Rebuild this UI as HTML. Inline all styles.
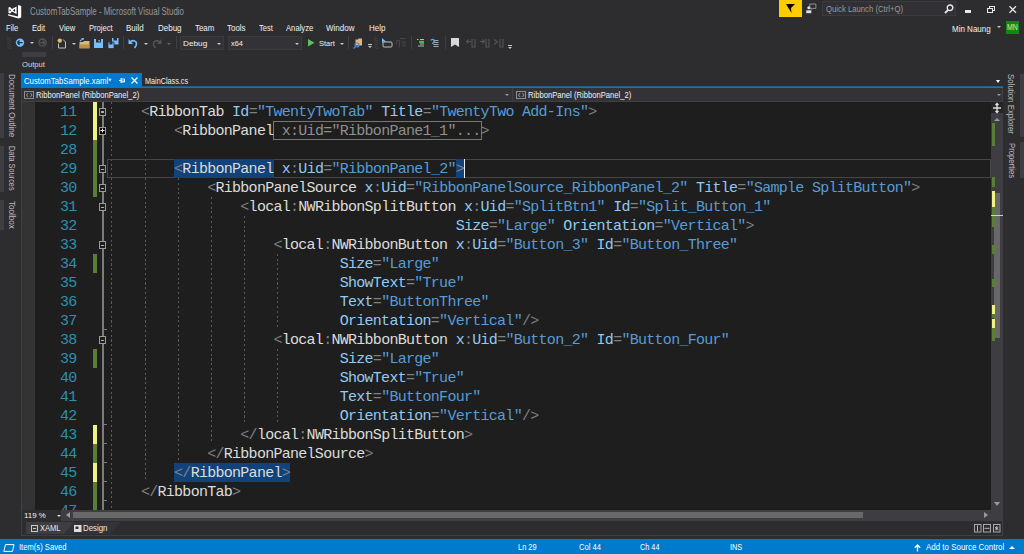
<!DOCTYPE html>
<html><head><meta charset="utf-8">
<style>
*{margin:0;padding:0;box-sizing:border-box}
html,body{width:1024px;height:554px;overflow:hidden;background:#2d2d30;position:relative;font-family:"Liberation Sans",sans-serif}
.a{position:absolute}
svg.a{overflow:visible}
.u{position:absolute;white-space:nowrap;transform-origin:0 0}
.v{position:absolute;white-space:nowrap;writing-mode:vertical-rl;font-size:9px;line-height:8px;color:#d0d0d0}
.cl{position:absolute;left:107.8px;white-space:pre;font-family:"Liberation Mono",monospace;font-size:15px;letter-spacing:-0.72px;line-height:19px;height:19px;color:#dcdcdc}
.ln{position:absolute;left:39.5px;width:37px;text-align:right;font-family:"Liberation Mono",monospace;font-size:15px;letter-spacing:-0.72px;line-height:19px;color:#2b91af}
.sep{position:absolute;top:36px;width:1px;height:13px;background:#3f3f46}
.dd{position:absolute;width:0;height:0;border-left:2px solid transparent;border-right:2px solid transparent;border-top:2px solid #c8c8c8}
.g{position:absolute;width:1px;background:repeating-linear-gradient(to bottom,#5a5a5a 0,#5a5a5a 2px,transparent 2px,transparent 4.75px)}
.fb{position:absolute;left:99px;width:7px;height:8px;border:1px solid #9a9a9a;background:#1e1e1e}
.fb::after{content:"";position:absolute;left:1px;top:2.5px;width:3px;height:1.5px;background:#b0b0b0}
.fp::after{display:none}
.tick{position:absolute;left:103px;width:3.5px;height:1px;background:#7c7c7c}
.chg{position:absolute;left:93px;width:4px}
</style></head><body>

<!-- ===== title bar ===== -->
<svg class="a" style="left:0;top:0" width="26" height="20" viewBox="0 0 26 20">
  <path d="M18 4.9 L21.2 6.1 L21.2 17.6 L18.6 18.4 L8.1 15.6 L8.1 14.2 L18 16.4 Z" fill="#fff"/>
  <path d="M8.5 7.6 L10 7 L12 9 L16.6 6.6 L16.6 14.1 L12 11.6 L10 13.6 L8.5 13 Z M9.6 9 L11.2 10.3 L9.6 11.6 Z M15.1 8.7 L12.9 10.3 L15.1 11.9 Z" fill="#fff" fill-rule="evenodd"/>
</svg>

<div class="a" style="left:779px;top:0;width:23px;height:17px;background:#ffcc00"></div>
<svg class="a" style="left:785px;top:3px" width="11" height="11" viewBox="0 0 11 11"><path d="M1 1 L10 1 L6 5 L6.5 10 Z" fill="#000"/></svg>
<svg class="a" style="left:805px;top:3px" width="12" height="11" viewBox="0 0 12 11">
 <path d="M4.8 1 L10.9 1 L10.9 5.4 L7.5 5.4 L6.5 6.4 L6.5 5.4 L4.8 5.4 Z" fill="none" stroke="#a8a8a8" stroke-width="0.8"/>
 <circle cx="3.8" cy="4.8" r="1.5" fill="#e0e0e0"/><path d="M1.3 10.2 L1.3 7.3 L6.3 7.3 L6.3 10.2 Z" fill="#e0e0e0"/>
</svg>
<div class="a" style="left:822px;top:1px;width:134px;height:15px;background:#313135;border:1px solid #3a3a3f"></div>
<svg class="a" style="left:944px;top:4px" width="10" height="10" viewBox="0 0 10 10"><circle cx="6" cy="3.8" r="2.8" fill="none" stroke="#e8e8e8" stroke-width="1.4"/><path d="M4.2 5.8 L1 9" stroke="#e8e8e8" stroke-width="1.8"/></svg>
<div class="a" style="left:964.5px;top:10px;width:6.5px;height:2.5px;background:#e8e8e8"></div>
<svg class="a" style="left:987px;top:6px" width="8" height="7" viewBox="0 0 8 7"><rect x="2.5" y="0.5" width="5" height="4" fill="none" stroke="#e8e8e8"/><rect x="0.5" y="2.5" width="5" height="4" fill="#2d2d30" stroke="#e8e8e8"/></svg>
<svg class="a" style="left:1009px;top:6px" width="8" height="7" viewBox="0 0 8 7"><path d="M0.5 0.3 L7 6.7 M7 0.3 L0.5 6.7" stroke="#e8e8e8" stroke-width="1.2"/></svg>

<!-- ===== menu ===== -->

<div class="dd" style="left:997px;top:26px"></div>
<div class="a" style="left:1006px;top:21px;width:13px;height:13px;background:#0e8a0e"></div>

<!-- ===== toolbar ===== -->
<svg class="a" style="left:7px;top:37px" width="5" height="12" viewBox="0 0 5 12"><g fill="#4a4a4a"><rect x="0.5" y="0" width="1" height="1"/><rect x="0.5" y="2" width="1" height="1"/><rect x="0.5" y="4" width="1" height="1"/><rect x="0.5" y="6" width="1" height="1"/><rect x="0.5" y="8" width="1" height="1"/><rect x="0.5" y="10" width="1" height="1"/><rect x="2.5" y="1" width="1" height="1"/><rect x="2.5" y="3" width="1" height="1"/><rect x="2.5" y="5" width="1" height="1"/><rect x="2.5" y="7" width="1" height="1"/><rect x="2.5" y="9" width="1" height="1"/><rect x="2.5" y="11" width="1" height="1"/></g></svg>
<svg class="a" style="left:15px;top:38px" width="10" height="10" viewBox="0 0 10 10"><circle cx="5" cy="4.6" r="4.2" fill="#75beff"/><path d="M2.3 4.6 L4.6 2.4 M2.3 4.6 L4.6 6.8 M2.5 4.6 L7.6 4.6" stroke="#2d2d30" stroke-width="1.4"/></svg>
<div class="dd" style="left:29.5px;top:42px"></div>
<svg class="a" style="left:37.5px;top:38px" width="10" height="10" viewBox="0 0 10 10"><circle cx="4.5" cy="4.6" r="3.6" fill="none" stroke="#555" stroke-width="1.3"/><path d="M7 4.6 L4.7 2.6 M7 4.6 L4.7 6.6 M2.2 4.6 L6.8 4.6" stroke="#555" stroke-width="1.2"/></svg>
<div class="sep" style="left:52px"></div>
<svg class="a" style="left:57px;top:37.5px" width="10" height="11" viewBox="0 0 10 11"><path d="M1.5 5.5 L1.5 10 L8.5 10 L8.5 4 L6 1.5" fill="none" stroke="#c0c0c0" stroke-width="1"/><circle cx="2.8" cy="2.6" r="2.2" fill="#dcb67a"/></svg>
<div class="dd" style="left:71.5px;top:42.5px"></div>
<svg class="a" style="left:79px;top:38px" width="11" height="11" viewBox="0 0 11 11"><path d="M0.5 4 L4 4 L5 3 L10.5 3 L10.5 10.3 L0.5 10.3 Z" fill="#dcb67a"/><path d="M0.6 6.5 L10.3 6.5 L10.3 10.3 L0.6 10.3Z" fill="#b98f4c"/><path d="M1 3 L4 0.6 M2.5 0.5 L4.2 0.6 L4 2" fill="none" stroke="#75beff" stroke-width="1.2"/></svg>
<svg class="a" style="left:94px;top:38.5px" width="10" height="10" viewBox="0 0 10 10"><path d="M0 0 L9 0 L9 9 L0 9Z" fill="#75beff"/><path d="M2 0 L7 0 L7 3.5 L2 3.5Z" fill="#2d2d30"/><rect x="4.5" y="1" width="1.3" height="1.6" fill="#75beff"/></svg>
<svg class="a" style="left:108px;top:38px" width="11" height="11" viewBox="0 0 11 11"><path d="M4 0 L10.5 0 L10.5 6.5 L4 6.5Z" fill="#75beff"/><path d="M5.5 0 L9 0 L9 2.5 L5.5 2.5Z" fill="#2d2d30"/><path d="M0 4 L6 4 L6 10.5 L0 10.5Z" fill="#75beff" stroke="#2d2d30" stroke-width="0.8"/><path d="M1.5 4 L4.5 4 L4.5 6.5 L1.5 6.5Z" fill="#2d2d30"/></svg>
<div class="sep" style="left:123px"></div>
<svg class="a" style="left:127.5px;top:37.5px" width="10" height="11" viewBox="0 0 10 11"><path d="M1.5 4.5 Q5 1 8 4 Q9.5 6.5 6.5 10" fill="none" stroke="#75beff" stroke-width="1.6"/><path d="M0.5 1 L0.5 6 L5 6Z" fill="#75beff"/></svg>
<div class="dd" style="left:144px;top:42.5px"></div>
<svg class="a" style="left:152px;top:37.5px" width="10" height="11" viewBox="0 0 10 11"><path d="M8.5 4.5 Q5 1 2 4 Q0.5 6.5 3.5 10" fill="none" stroke="#555" stroke-width="1.5"/><path d="M9.5 1 L9.5 6 L5 6Z" fill="#555"/></svg>
<div class="dd" style="left:167px;top:42.5px;border-top-color:#666"></div>
<div class="sep" style="left:176px"></div>
<div class="a" style="left:180px;top:35.5px;width:44px;height:14px;background:#333337;border:1px solid #3a3a3f"></div>
<div class="dd" style="left:217px;top:42.5px"></div>
<div class="a" style="left:228px;top:35.5px;width:74px;height:14px;background:#333337;border:1px solid #3a3a3f"></div>
<div class="dd" style="left:295px;top:42.5px"></div>
<svg class="a" style="left:307.5px;top:39px" width="7" height="8" viewBox="0 0 7 8"><path d="M0 0 L6.5 3.7 L0 7.5Z" fill="#5fbf5f"/></svg>
<div class="dd" style="left:340px;top:42.5px"></div>
<div class="sep" style="left:348px"></div>
<svg class="a" style="left:353px;top:37.5px" width="11" height="11" viewBox="0 0 11 11"><path d="M2.5 1.5 L5 1.5 L5.5 0.5 L9 0.5 L9 7.5 L2.5 7.5Z" fill="#dcb67a"/><circle cx="4" cy="7" r="2" fill="none" stroke="#3e8ed0" stroke-width="1.2"/><path d="M2.6 8.4 L0.5 10.5" stroke="#3e8ed0" stroke-width="1.4"/></svg>
<div class="a" style="left:367.5px;top:44px;width:4px;height:1px;background:#c8c8c8"></div>
<div class="dd" style="left:367.5px;top:46px"></div>
<svg class="a" style="left:374px;top:37px" width="5" height="12" viewBox="0 0 5 12"><g fill="#4a4a4a"><rect x="0.5" y="0" width="1" height="1"/><rect x="0.5" y="2" width="1" height="1"/><rect x="0.5" y="4" width="1" height="1"/><rect x="0.5" y="6" width="1" height="1"/><rect x="0.5" y="8" width="1" height="1"/><rect x="0.5" y="10" width="1" height="1"/><rect x="2.5" y="1" width="1" height="1"/><rect x="2.5" y="3" width="1" height="1"/><rect x="2.5" y="5" width="1" height="1"/><rect x="2.5" y="7" width="1" height="1"/><rect x="2.5" y="9" width="1" height="1"/><rect x="2.5" y="11" width="1" height="1"/></g></svg>
<svg class="a" style="left:382px;top:38px" width="11" height="10" viewBox="0 0 11 10"><rect x="1" y="4" width="9" height="5" rx="1" fill="none" stroke="#c0c0c0" stroke-width="1"/><path d="M0 0 L0 5 L1.5 3.5 L4.5 4Z" fill="#75beff"/></svg>
<svg class="a" style="left:395.5px;top:37.5px" width="11" height="10" viewBox="0 0 11 10"><path d="M4 0.5 L10 0.5 M0.5 2.5 L3.5 2.5 M0.5 2.5 L0.5 6.5 M3.5 2.5 L3.5 9.5 M5 4 L10 4 M6 6 L10 6 M6 8 L10 8" fill="none" stroke="#454545" stroke-width="1"/></svg>
<div class="sep" style="left:411px"></div>
<svg class="a" style="left:417px;top:39px" width="8" height="8" viewBox="0 0 8 8"><path d="M0 0.5 L1.5 0.5 M3 0.5 L7 0.5 M3 5 L7 5 M1 7 L7 7 M2 3 L3 3" fill="none" stroke="#b8b8b8" stroke-width="1"/><rect x="2.5" y="1.8" width="4.5" height="2.4" fill="#3fc03f"/></svg>
<svg class="a" style="left:430px;top:38.5px" width="10" height="9" viewBox="0 0 10 9"><path d="M3.5 1.5 L8.5 1.5 M3.5 3.5 L8.5 3.5 M3.5 5.5 L8.5 5.5 M3.5 7.5 L8.5 7.5" stroke="#a8a8a8" stroke-width="1.2"/><path d="M0.8 1.2 Q2.5 -0.2 4.2 1 Q5 2.5 3.2 3.6 L2.5 5" fill="none" stroke="#5aa7e8" stroke-width="1.3"/></svg>
<div class="sep" style="left:445px"></div>
<svg class="a" style="left:450.5px;top:38px" width="9" height="10" viewBox="0 0 9 10"><path d="M0 0 L8 0 L8 9 L4 6.5 L0 9Z" fill="#d8d8d8"/></svg>
<svg class="a" style="left:466px;top:38px" width="10" height="10" viewBox="0 0 10 10"><path d="M6 1 L6 9 L9 9 L9 1 M0.5 3.5 L5 3.5 M2.5 1.5 L0.5 3.5 L2.5 5.5" fill="none" stroke="#555" stroke-width="1.1"/></svg>
<svg class="a" style="left:480px;top:38px" width="10" height="10" viewBox="0 0 10 10"><path d="M6 1 L6 9 L9 9 L9 1 M0 3.5 L4.5 3.5 M2.5 1.5 L4.5 3.5 L2.5 5.5" fill="none" stroke="#555" stroke-width="1.1"/></svg>
<svg class="a" style="left:494px;top:38px" width="10" height="10" viewBox="0 0 10 10"><path d="M6 1 L6 9 L9 9 L9 1 M0 1.5 L3.5 4 L0 6.5" fill="none" stroke="#555" stroke-width="1.1"/></svg>
<div class="a" style="left:508px;top:45px;width:4px;height:1px;background:#c8c8c8"></div>
<div class="dd" style="left:508px;top:47px"></div>

<!-- ===== output collapsed strip ===== -->
<div class="a" style="left:21.5px;top:52px;width:24px;height:4.5px;background:#3e3e42"></div>

<!-- ===== left tool strip ===== -->
<div class="a" style="left:0;top:73.4px;width:4px;height:64.5px;background:#3e3e42"></div>
<div class="a" style="left:0;top:145.5px;width:4px;height:46.5px;background:#3e3e42"></div>
<div class="a" style="left:0;top:200px;width:4px;height:29.5px;background:#3e3e42"></div>

<!-- ===== right tool strip ===== -->
<div class="a" style="left:1019.5px;top:73.7px;width:4.5px;height:63.7px;background:#3e3e42"></div>
<div class="a" style="left:1019.5px;top:142px;width:4.5px;height:36px;background:#3e3e42"></div>

<!-- ===== doc tabs ===== -->
<div class="a" style="left:21px;top:73px;width:121px;height:14px;background:#007acc"></div>
<svg class="a" style="left:119px;top:77px" width="6" height="7" viewBox="0 0 6 7"><path d="M0 3.5 L2 3.5 M2 1 L2 6 M2 2 L5.5 2 L5.5 5 L2 5 M2 4 L5.5 4" fill="none" stroke="#fff" stroke-width="0.9"/></svg>
<svg class="a" style="left:131px;top:77px" width="7" height="7" viewBox="0 0 7 7"><path d="M0.5 0.5 L6.5 6.5 M6.5 0.5 L0.5 6.5" stroke="#fff" stroke-width="1.2"/></svg>
<div class="a" style="left:996px;top:80px;width:0;height:0;border-left:2.5px solid transparent;border-right:2.5px solid transparent;border-top:3px solid #fff"></div>
<div class="a" style="left:21px;top:87px;width:982px;height:1px;background:#007acc"></div><div class="a" style="left:142px;top:86px;width:861px;height:1px;background:#1a5e8e"></div>

<!-- ===== nav bar ===== -->
<div class="a" style="left:21px;top:88px;width:982px;height:14px;background:#333337;border:1px solid #3f3f46;border-top:none"></div>
<div class="a" style="left:511.5px;top:88px;width:1.5px;height:14px;background:#3f3f46"></div>
<svg class="a" style="left:24px;top:91px" width="11" height="8" viewBox="0 0 11 8"><rect x="0.5" y="0.5" width="9" height="7" fill="none" stroke="#8c8c8c"/><path d="M4 2 L2.5 4 L4 6 M6.5 2 L8 4 L6.5 6" fill="none" stroke="#a0a0a0" stroke-width="0.9"/></svg>
<div class="dd" style="left:505px;top:94px;border-top-color:#999"></div>
<svg class="a" style="left:515.5px;top:91px" width="11" height="8" viewBox="0 0 11 8"><rect x="0.5" y="0.5" width="9" height="7" fill="none" stroke="#8c8c8c"/><path d="M4 2 L2.5 4 L4 6 M6.5 2 L8 4 L6.5 6" fill="none" stroke="#a0a0a0" stroke-width="0.9"/></svg>
<div class="dd" style="left:997px;top:94px;border-top-color:#999"></div>

<!-- ===== editor ===== -->
<div class="a" style="left:21px;top:102px;width:1px;height:419px;background:#3f3f46"></div>
<div class="a" style="left:22px;top:102px;width:13px;height:408px;background:#333333"></div>
<div class="a" style="left:35px;top:102px;width:956.5px;height:408px;background:#1e1e1e"></div>
<!-- change margin -->
<div class="chg" style="top:102px;height:38px;background:#eff284"></div>
<div class="chg" style="top:140px;height:57px;background:#5b7d35"></div>
<div class="chg" style="top:254px;height:19px;background:#5b7d35"></div>
<div class="chg" style="top:349px;height:19px;background:#5b7d35"></div>
<div class="chg" style="top:425px;height:19px;background:#eff284"></div>
<div class="chg" style="top:444px;height:19px;background:#5b7d35"></div>
<div class="chg" style="top:463px;height:19px;background:#eff284"></div>
<div class="chg" style="top:482px;height:28px;background:#5b7d35"></div>
<!-- outline line -->
<div class="a" style="left:102.2px;top:102px;width:1.8px;height:408px;background:#7c7c7c"></div>
<div class="fb" style="top:107.8px"></div>
<div class="fb fp" style="top:126.8px;background:#000"></div>
<svg class="a" style="left:100px;top:128px" width="5" height="6" viewBox="0 0 5 6"><path d="M2.5 0.5 L2.5 4.5 M0.5 2.5 L4.5 2.5" stroke="#f0f0f0" stroke-width="1"/></svg>
<div class="fb" style="top:165px"></div>
<div class="fb" style="top:184px"></div>
<div class="fb" style="top:203px"></div>
<div class="fb" style="top:241px"></div>
<div class="fb" style="top:336px"></div>
<div class="tick" style="top:329px"></div>
<div class="tick" style="top:424px"></div>
<div class="tick" style="top:443px"></div>
<div class="tick" style="top:462px"></div>
<div class="tick" style="top:481px"></div>
<div class="tick" style="top:500px"></div>
<!-- guides -->
<div class="g" style="left:111px;top:102px;height:408px"></div>
<div class="g" style="left:145px;top:120.5px;height:361px"></div>
<div class="g" style="left:177.5px;top:177.5px;height:284px"></div>
<div class="g" style="left:210.5px;top:196.5px;height:247px"></div>
<div class="g" style="left:244px;top:215.5px;height:209px"></div>
<div class="g" style="left:277px;top:253.5px;height:76px"></div>
<div class="g" style="left:277px;top:348.5px;height:76px"></div>
<!-- current line + highlights -->
<div class="a" style="left:107px;top:158.8px;width:883.5px;height:18.9px;border:1.5px solid #464646"></div>
<div class="a" style="left:174.1px;top:158.8px;width:99.5px;height:18.9px;background:#11427a"></div>
<div class="a" style="left:456px;top:158.8px;width:8.4px;height:18.9px;background:#11427a"></div>
<div class="a" style="left:464px;top:158.8px;width:1px;height:18.9px;background:#f0f0f0"></div>
<div class="a" style="left:174.1px;top:462.5px;width:116.1px;height:19px;background:#11427a"></div>
<!-- collapsed box -->
<div class="a" style="left:273.2px;top:121px;width:208.6px;height:19px;border:1px solid #777"></div>
<div class="ln" style="top:102.5px">11</div>
<div class="ln" style="top:121.5px">12</div>
<div class="ln" style="top:140.5px">28</div>
<div class="ln" style="top:159.5px">29</div>
<div class="ln" style="top:178.5px">30</div>
<div class="ln" style="top:197.5px">31</div>
<div class="ln" style="top:216.5px">32</div>
<div class="ln" style="top:235.5px">33</div>
<div class="ln" style="top:254.5px">34</div>
<div class="ln" style="top:273.5px">35</div>
<div class="ln" style="top:292.5px">36</div>
<div class="ln" style="top:311.5px">37</div>
<div class="ln" style="top:330.5px">38</div>
<div class="ln" style="top:349.5px">39</div>
<div class="ln" style="top:368.5px">40</div>
<div class="ln" style="top:387.5px">41</div>
<div class="ln" style="top:406.5px">42</div>
<div class="ln" style="top:425.5px">43</div>
<div class="ln" style="top:444.5px">44</div>
<div class="ln" style="top:463.5px">45</div>
<div class="ln" style="top:482.5px">46</div>
<div class="ln" style="top:501.5px">47</div>
<div class="cl" style="top:102.5px">    <span style="color:#808080">&lt;</span><span style="color:#dcdcdc">RibbonTab</span> <span style="color:#92caf4">Id</span><span style="color:#808080">=</span><span style="color:#569cd6">&quot;TwentyTwoTab&quot;</span> <span style="color:#92caf4">Title</span><span style="color:#808080">=</span><span style="color:#569cd6">&quot;TwentyTwo Add-Ins&quot;</span><span style="color:#808080">&gt;</span></div>
<div class="cl" style="top:121.5px">        <span style="color:#808080">&lt;</span>RibbonPanel<span style="color:#8f8f8f"> x:Uid="RibbonPane1_1"...</span><span style="color:#808080">&gt;</span></div>
<div class="cl" style="top:140.5px"></div>
<div class="cl" style="top:159.5px">        <span style="color:#808080">&lt;</span><span style="color:#dcdcdc">RibbonPanel</span> <span style="color:#92caf4">x</span><span style="color:#808080">:</span><span style="color:#92caf4">Uid</span><span style="color:#808080">=</span><span style="color:#569cd6">&quot;RibbonPanel_2&quot;</span><span style="color:#808080">&gt;</span></div>
<div class="cl" style="top:178.5px">            <span style="color:#808080">&lt;</span><span style="color:#dcdcdc">RibbonPanelSource</span> <span style="color:#92caf4">x</span><span style="color:#808080">:</span><span style="color:#92caf4">Uid</span><span style="color:#808080">=</span><span style="color:#569cd6">&quot;RibbonPanelSource_RibbonPanel_2&quot;</span> <span style="color:#92caf4">Title</span><span style="color:#808080">=</span><span style="color:#569cd6">&quot;Sample SplitButton&quot;</span><span style="color:#808080">&gt;</span></div>
<div class="cl" style="top:197.5px">                <span style="color:#808080">&lt;</span><span style="color:#dcdcdc">local</span><span style="color:#808080">:</span><span style="color:#dcdcdc">NWRibbonSplitButton</span> <span style="color:#92caf4">x</span><span style="color:#808080">:</span><span style="color:#92caf4">Uid</span><span style="color:#808080">=</span><span style="color:#569cd6">&quot;SplitBtn1&quot;</span> <span style="color:#92caf4">Id</span><span style="color:#808080">=</span><span style="color:#569cd6">&quot;Split_Button_1&quot;</span></div>
<div class="cl" style="top:216.5px">                                          <span style="color:#92caf4">Size</span><span style="color:#808080">=</span><span style="color:#569cd6">&quot;Large&quot;</span> <span style="color:#92caf4">Orientation</span><span style="color:#808080">=</span><span style="color:#569cd6">&quot;Vertical&quot;</span><span style="color:#808080">&gt;</span></div>
<div class="cl" style="top:235.5px">                    <span style="color:#808080">&lt;</span><span style="color:#dcdcdc">local</span><span style="color:#808080">:</span><span style="color:#dcdcdc">NWRibbonButton</span> <span style="color:#92caf4">x</span><span style="color:#808080">:</span><span style="color:#92caf4">Uid</span><span style="color:#808080">=</span><span style="color:#569cd6">&quot;Button_3&quot;</span> <span style="color:#92caf4">Id</span><span style="color:#808080">=</span><span style="color:#569cd6">&quot;Button_Three&quot;</span></div>
<div class="cl" style="top:254.5px">                            <span style="color:#92caf4">Size</span><span style="color:#808080">=</span><span style="color:#569cd6">&quot;Large&quot;</span></div>
<div class="cl" style="top:273.5px">                            <span style="color:#92caf4">ShowText</span><span style="color:#808080">=</span><span style="color:#569cd6">&quot;True&quot;</span></div>
<div class="cl" style="top:292.5px">                            <span style="color:#92caf4">Text</span><span style="color:#808080">=</span><span style="color:#569cd6">&quot;ButtonThree&quot;</span></div>
<div class="cl" style="top:311.5px">                            <span style="color:#92caf4">Orientation</span><span style="color:#808080">=</span><span style="color:#569cd6">&quot;Vertical&quot;</span><span style="color:#808080">/&gt;</span></div>
<div class="cl" style="top:330.5px">                    <span style="color:#808080">&lt;</span><span style="color:#dcdcdc">local</span><span style="color:#808080">:</span><span style="color:#dcdcdc">NWRibbonButton</span> <span style="color:#92caf4">x</span><span style="color:#808080">:</span><span style="color:#92caf4">Uid</span><span style="color:#808080">=</span><span style="color:#569cd6">&quot;Button_2&quot;</span> <span style="color:#92caf4">Id</span><span style="color:#808080">=</span><span style="color:#569cd6">&quot;Button_Four&quot;</span></div>
<div class="cl" style="top:349.5px">                            <span style="color:#92caf4">Size</span><span style="color:#808080">=</span><span style="color:#569cd6">&quot;Large&quot;</span></div>
<div class="cl" style="top:368.5px">                            <span style="color:#92caf4">ShowText</span><span style="color:#808080">=</span><span style="color:#569cd6">&quot;True&quot;</span></div>
<div class="cl" style="top:387.5px">                            <span style="color:#92caf4">Text</span><span style="color:#808080">=</span><span style="color:#569cd6">&quot;ButtonFour&quot;</span></div>
<div class="cl" style="top:406.5px">                            <span style="color:#92caf4">Orientation</span><span style="color:#808080">=</span><span style="color:#569cd6">&quot;Vertical&quot;</span><span style="color:#808080">/&gt;</span></div>
<div class="cl" style="top:425.5px">                <span style="color:#808080">&lt;/</span><span style="color:#dcdcdc">local</span><span style="color:#808080">:</span><span style="color:#dcdcdc">NWRibbonSplitButton</span><span style="color:#808080">&gt;</span></div>
<div class="cl" style="top:444.5px">            <span style="color:#808080">&lt;/</span><span style="color:#dcdcdc">RibbonPanelSource</span><span style="color:#808080">&gt;</span></div>
<div class="cl" style="top:463.5px">        <span style="color:#808080">&lt;/</span><span style="color:#dcdcdc">RibbonPanel</span><span style="color:#808080">&gt;</span></div>
<div class="cl" style="top:482.5px">    <span style="color:#808080">&lt;/</span><span style="color:#dcdcdc">RibbonTab</span><span style="color:#808080">&gt;</span></div>
<div class="cl" style="top:501.5px"></div>

<!-- ===== vertical scrollbar ===== -->
<div class="a" style="left:991.2px;top:102px;width:11.8px;height:419px;background:#3e3e42"></div>
<div class="a" style="left:991.2px;top:102px;width:11.8px;height:11px;background:#252526"></div>
<svg class="a" style="left:992px;top:102.5px" width="10" height="10" viewBox="0 0 10 10"><path d="M5 0.5 L5 9.5 M1 5 L9 5 M3.5 2 L5 0.5 L6.5 2 M3.5 8 L5 9.5 L6.5 8" fill="none" stroke="#e0e0e0" stroke-width="1.3"/></svg>
<div class="a" style="left:994px;top:118px;width:0;height:0;border-left:3px solid transparent;border-right:3px solid transparent;border-bottom:3px solid #999"></div>
<div class="a" style="left:993.8px;top:193px;width:6.1px;height:145px;background:#686868"></div>
<div class="a" style="left:992px;top:123.3px;width:3px;height:22.8px;background:#5b7d35"></div>
<div class="a" style="left:992px;top:177px;width:3px;height:9.5px;background:#5b7d35"></div>
<div class="a" style="left:992px;top:190.8px;width:3px;height:16px;background:#eff284"></div>
<div class="a" style="left:992px;top:206.7px;width:3px;height:20.3px;background:#5b7d35"></div>
<div class="a" style="left:992px;top:245px;width:3px;height:8.6px;background:#5b7d35"></div>
<div class="a" style="left:992px;top:278.8px;width:3px;height:8.6px;background:#5b7d35"></div>
<div class="a" style="left:992px;top:305px;width:3px;height:9.2px;background:#eff284"></div>
<div class="a" style="left:992px;top:314.2px;width:3px;height:4.3px;background:#5b7d35"></div>
<div class="a" style="left:992px;top:318.5px;width:3px;height:9.4px;background:#eff284"></div>
<div class="a" style="left:992px;top:327.9px;width:3px;height:13.3px;background:#5b7d35"></div>
<div class="a" style="left:991px;top:215px;width:12px;height:1px;background:#d0d0d0"></div>
<div class="a" style="left:994px;top:502px;width:0;height:0;border-left:3px solid transparent;border-right:3px solid transparent;border-top:4px solid #999"></div>

<!-- ===== horizontal scrollbar row ===== -->
<div class="a" style="left:22px;top:510px;width:39px;height:11px;background:#2d2d30"></div>
<div class="dd" style="left:56.5px;top:514.5px;border-top-color:#ddd"></div>
<div class="a" style="left:61px;top:510px;width:930px;height:11px;background:#3e3e42"></div>
<div class="a" style="left:65.5px;top:512px;width:0;height:0;border-top:3px solid transparent;border-bottom:3px solid transparent;border-right:4px solid #999"></div>
<div class="a" style="left:73px;top:512.3px;width:790px;height:6px;background:#686868"></div>
<div class="a" style="left:984px;top:512px;width:0;height:0;border-top:3px solid transparent;border-bottom:3px solid transparent;border-left:4px solid #999"></div>

<!-- ===== xaml/design tabs ===== -->
<div class="a" style="left:21px;top:521px;width:982px;height:14.5px;background:#2d2d30;border:1px solid #3f3f46;border-top:none"></div>
<svg class="a" style="left:26px;top:521.5px" width="100" height="12" viewBox="0 0 100 12">
 <path d="M0 0 L48.5 0 L38 12 L0 12Z" fill="#3e3e42"/>
 <path d="M48.5 0 L95 0 L84.5 12 L38 12Z" fill="#333337"/>
</svg>
<svg class="a" style="left:30.5px;top:524.5px" width="7" height="7" viewBox="0 0 7 7"><rect x="0.5" y="0.5" width="6" height="6" fill="none" stroke="#c8c8c8"/><path d="M2 3.5 L5 3.5" stroke="#c8c8c8"/></svg>
<svg class="a" style="left:73.5px;top:524.5px" width="8" height="7" viewBox="0 0 8 7"><rect x="0" y="0" width="7.5" height="7" fill="#e0e0e0"/><rect x="1.5" y="1.5" width="3" height="2.5" fill="#333"/></svg>
<svg class="a" style="left:973px;top:524px" width="28" height="9" viewBox="0 0 28 9">
 <rect x="1.5" y="0.5" width="6.5" height="7.5" fill="none" stroke="#a8a8a8"/><path d="M4.5 1.5 L4.5 7.5" stroke="#b8b8b8" stroke-width="1"/>
 <rect x="10.5" y="0.5" width="7" height="7.5" fill="none" stroke="#a8a8a8"/><path d="M11.5 4.3 L16.5 4.3" stroke="#b8b8b8" stroke-width="1"/>
 <rect x="20.5" y="0.5" width="6.5" height="7.5" fill="none" stroke="#a8a8a8"/><path d="M23.7 2 L23.7 6.5 M22 3.2 L25.4 5.4 M25.4 3.2 L22 5.4" stroke="#d0d0d0" stroke-width="0.8"/>
</svg>

<!-- ===== status bar ===== -->
<div class="a" style="left:0;top:539px;width:1024px;height:15px;background:#007acc"></div>
<svg class="a" style="left:2.5px;top:543.5px" width="12" height="8" viewBox="0 0 12 8"><path d="M2.5 0.6 L11 0.6 L9.5 7.4 L0.8 7.4Z" fill="none" stroke="#fff" stroke-width="1"/></svg>
<svg class="a" style="left:913.5px;top:544px" width="7" height="8" viewBox="0 0 7 8"><path d="M3.5 1 L3.5 7.5 M0.8 3.8 L3.5 1 L6.2 3.8" fill="none" stroke="#fff" stroke-width="1.3"/></svg>
<div class="a" style="left:1008.8px;top:546px;width:0;height:0;border-left:3px solid transparent;border-right:3px solid transparent;border-bottom:3px solid #fff"></div>
<div class="u" style="left:29.50px;top:6.95px;font-size:10.34px;line-height:10.34px;color:#999999;transform:scaleX(0.7651)">CustomTabSample - Microsoft Visual Studio</div>
<div class="u" style="left:825.90px;top:4.55px;font-size:8.80px;line-height:8.80px;color:#999999;transform:scaleX(0.8783)">Quick Launch (Ctrl+Q)</div>
<div class="u" style="left:6.25px;top:23.69px;font-size:8.52px;line-height:8.52px;color:#f1f1f1;transform:scaleX(0.8948)">File</div>
<div class="u" style="left:32.00px;top:23.69px;font-size:8.52px;line-height:8.52px;color:#f1f1f1;transform:scaleX(0.8996)">Edit</div>
<div class="u" style="left:58.75px;top:23.69px;font-size:8.52px;line-height:8.52px;color:#f1f1f1;transform:scaleX(0.8886)">View</div>
<div class="u" style="left:88.75px;top:23.69px;font-size:8.52px;line-height:8.52px;color:#f1f1f1;transform:scaleX(0.8951)">Project</div>
<div class="u" style="left:125.75px;top:23.69px;font-size:8.52px;line-height:8.52px;color:#f1f1f1;transform:scaleX(0.9388)">Build</div>
<div class="u" style="left:157.50px;top:23.69px;font-size:8.52px;line-height:8.52px;color:#f1f1f1;transform:scaleX(0.9380)">Debug</div>
<div class="u" style="left:194.50px;top:23.69px;font-size:8.52px;line-height:8.52px;color:#f1f1f1;transform:scaleX(0.9298)">Team</div>
<div class="u" style="left:226.75px;top:23.69px;font-size:8.52px;line-height:8.52px;color:#f1f1f1;transform:scaleX(0.9315)">Tools</div>
<div class="u" style="left:258.50px;top:23.69px;font-size:8.52px;line-height:8.52px;color:#f1f1f1;transform:scaleX(0.8782)">Test</div>
<div class="u" style="left:285.50px;top:23.69px;font-size:8.52px;line-height:8.52px;color:#f1f1f1;transform:scaleX(0.9013)">Analyze</div>
<div class="u" style="left:326.00px;top:23.69px;font-size:8.52px;line-height:8.52px;color:#f1f1f1;transform:scaleX(0.9407)">Window</div>
<div class="u" style="left:368.50px;top:23.69px;font-size:8.52px;line-height:8.52px;color:#f1f1f1;transform:scaleX(0.9434)">Help</div>
<div class="u" style="left:951.80px;top:24.85px;font-size:8.80px;line-height:8.80px;color:#f1f1f1;transform:scaleX(0.9088)">Min Naung</div>
<div class="u" style="left:1007.20px;top:23.47px;font-size:8.66px;line-height:8.66px;color:#c8f0c8;transform:scaleX(0.8032)">MN</div>
<div class="u" style="left:183.20px;top:39.84px;font-size:8.10px;line-height:8.10px;color:#f1f1f1;transform:scaleX(1.0150)">Debug</div>
<div class="u" style="left:230.50px;top:39.84px;font-size:8.10px;line-height:8.10px;color:#f1f1f1;transform:scaleX(0.9079)">x64</div>
<div class="u" style="left:319.30px;top:39.84px;font-size:8.10px;line-height:8.10px;color:#f1f1f1;transform:scaleX(0.9191)">Start</div>
<div class="u" style="left:21.90px;top:60.88px;font-size:7.82px;line-height:7.82px;color:#d8d8d8;transform:scaleX(0.9760)">Output</div>
<div class="u" style="left:23.90px;top:76.67px;font-size:8.66px;line-height:8.66px;color:#ffffff;transform:scaleX(0.8972)">CustomTabSample.xaml*</div>
<div class="u" style="left:144.90px;top:76.67px;font-size:8.66px;line-height:8.66px;color:#f1f1f1;transform:scaleX(0.8376)">MainClass.cs</div>
<div class="u" style="left:35.80px;top:90.69px;font-size:8.52px;line-height:8.52px;color:#f1f1f1;transform:scaleX(0.8974)">RibbonPanel (RibbonPanel_2)</div>
<div class="u" style="left:527.50px;top:90.69px;font-size:8.52px;line-height:8.52px;color:#f1f1f1;transform:scaleX(0.8978)">RibbonPanel (RibbonPanel_2)</div>
<div class="u" style="left:23.90px;top:512.00px;font-size:7.68px;line-height:7.68px;color:#f1f1f1;transform:scaleX(1.0252)">119 %</div>
<div class="u" style="left:39.60px;top:523.97px;font-size:8.66px;line-height:8.66px;color:#e8e8e8;transform:scaleX(0.8683)">XAML</div>
<div class="u" style="left:83.40px;top:523.97px;font-size:8.66px;line-height:8.66px;color:#e8e8e8;transform:scaleX(0.9081)">Design</div>
<div class="u" style="left:18.50px;top:544.02px;font-size:8.24px;line-height:8.24px;color:#ffffff;transform:scaleX(0.9251)">Item(s) Saved</div>
<div class="u" style="left:517.80px;top:544.02px;font-size:8.24px;line-height:8.24px;color:#ffffff;transform:scaleX(0.9036)">Ln 29</div>
<div class="u" style="left:578.70px;top:544.02px;font-size:8.24px;line-height:8.24px;color:#ffffff;transform:scaleX(0.9206)">Col 44</div>
<div class="u" style="left:639.60px;top:544.02px;font-size:8.24px;line-height:8.24px;color:#ffffff;transform:scaleX(0.8842)">Ch 44</div>
<div class="u" style="left:729.70px;top:544.02px;font-size:8.24px;line-height:8.24px;color:#ffffff;transform:scaleX(0.8922)">INS</div>
<div class="u" style="left:926.10px;top:544.02px;font-size:8.24px;line-height:8.24px;color:#ffffff;transform:scaleX(0.9657)">Add to Source Control</div>
<div class="u" style="left:15.80px;top:74.20px;font-size:9.22px;line-height:9.22px;color:#bcbcbc;transform:rotate(90deg) scaleX(0.8553)">Document Outline</div>
<div class="u" style="left:15.57px;top:146.30px;font-size:8.94px;line-height:8.94px;color:#bcbcbc;transform:rotate(90deg) scaleX(0.8261)">Data Sources</div>
<div class="u" style="left:15.57px;top:200.50px;font-size:8.94px;line-height:8.94px;color:#bcbcbc;transform:rotate(90deg) scaleX(0.9044)">Toolbox</div>
<div class="u" style="left:1016.46px;top:73.70px;font-size:9.64px;line-height:9.64px;color:#bcbcbc;transform:rotate(90deg) scaleX(0.8179)">Solution Explorer</div>
<div class="u" style="left:1016.22px;top:142.50px;font-size:9.36px;line-height:9.36px;color:#bcbcbc;transform:rotate(90deg) scaleX(0.8249)">Properties</div>
</body></html>
